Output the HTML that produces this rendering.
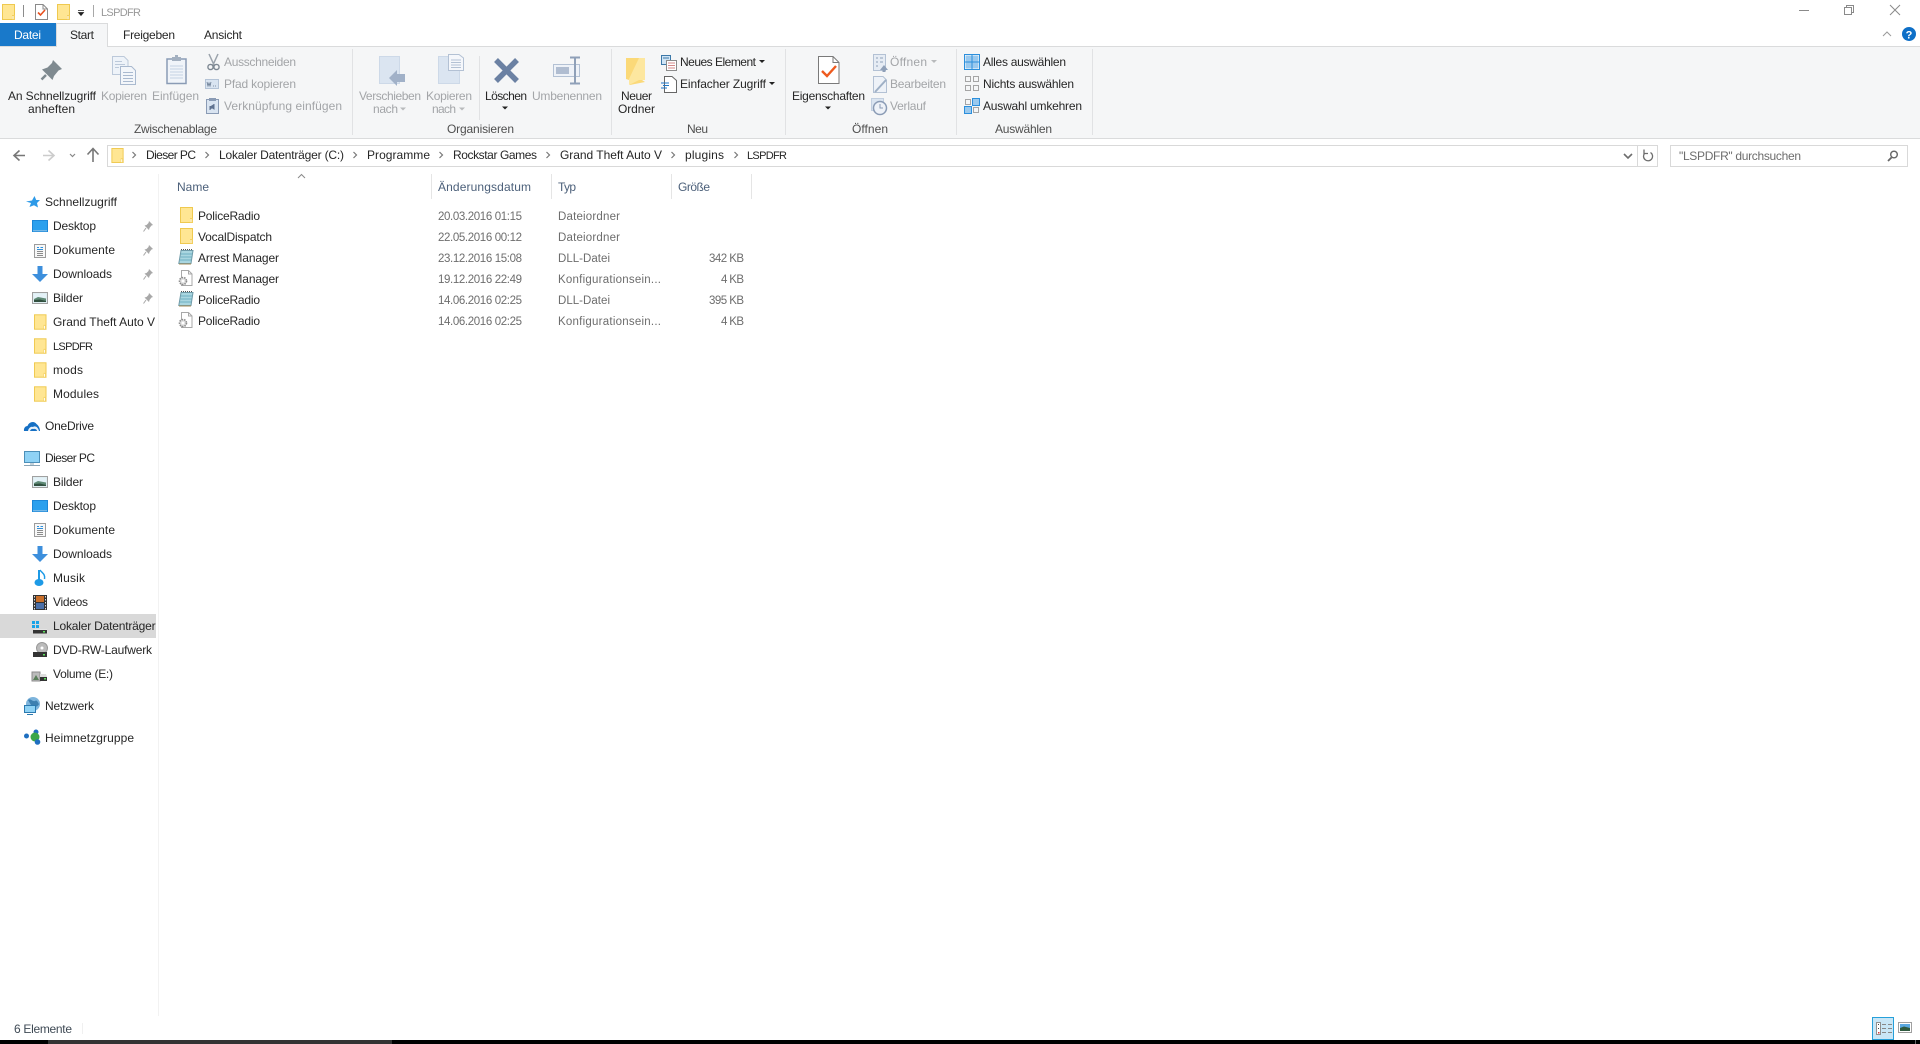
<!DOCTYPE html>
<html lang="de"><head><meta charset="utf-8"><title>LSPDFR</title>
<style>
html,body{margin:0;padding:0;background:#fff;width:1920px;height:1044px;overflow:hidden}
svg{display:block;position:absolute;left:0;top:0}
text{font-family:"Liberation Sans",sans-serif;font-size:12px;fill:#000;white-space:pre}
.g{fill:#a3a5a8}.d{fill:#6d6d6d;font-size:11.5px}.h{fill:#4c607a}.t{fill:#3f4a55}.w{fill:#fff}.l{fill:#4f4f4f}
.b{fill:#262626}.s{font-size:11px}
</style></head><body>
<svg width="1920" height="1044" viewBox="0 0 1920 1044" xmlns="http://www.w3.org/2000/svg">
<defs>
<symbol id="folder" viewBox="0 0 13 16" overflow="visible"><rect x=".5" y=".5" width="12" height="15" fill="#ffe693" stroke="#efc94f"/><rect x="10" y="11" width="3" height="5" fill="#f3cf5f"/><rect x="10.5" y="12" width="1" height="3" fill="#fff"/></symbol>
<symbol id="dll" viewBox="0 0 16 16" overflow="visible"><path d="M3 1.5H15L13 14.5H.8z" fill="#a9d6e0" stroke="#6e9aa8"/><path d="M3 5H14M2.6 8H13.6M2 11H13" stroke="#6fb0c2"/><path d="M3 .5h12" stroke="#555" stroke-dasharray="1 1"/><path d="M1 15h12" stroke="#a58f5c"/></symbol>
<symbol id="cfg" viewBox="0 0 15 16" overflow="visible"><path d="M3.5.5H10.500L14 4V15.500H3.500z" fill="#fff" stroke="#a8a8a8"/><path d="M10.500.5V4H14" fill="none" stroke="#a8a8a8"/><circle cx="5" cy="11" r="3.500" fill="#ddd" stroke="#8b8b8b" stroke-width="1.600" stroke-dasharray="1.500 1"/><circle cx="5" cy="11" r="1.400" fill="#fff"/></symbol>
<symbol id="pin" viewBox="0 0 10 11" overflow="visible"><path d="M6 0 10 4 8.500 4.500 6.500 7 6 9 1.500 4.500 3.500 4 5.500 2z" fill="#a8a8a8"/><path d="M3 7 .5 10.500" stroke="#a8a8a8"/></symbol>
<symbol id="bilder" viewBox="0 0 16 12" overflow="visible"><rect x=".5" y=".5" width="15" height="11" fill="#dfeef2" stroke="#a0a0a0"/><rect x="2" y="2" width="12" height="8" fill="#e4f2f8"/><path d="M2 7 6 5 14 6.500V10H2z" fill="#5f8a76"/><path d="M2 8 8 7.500 14 9V10H2z" fill="#31503f"/></symbol>
<symbol id="desk" viewBox="0 0 16 12" overflow="visible"><rect width="16" height="12" fill="#1a87d9"/><rect x="1" y="1" width="14" height="9" fill="#2aa0ee"/><path d="M1 10.800H15" stroke="#b9dcf2" stroke-width=".8"/></symbol>
<symbol id="docs" viewBox="0 0 12 14" overflow="visible"><rect x=".5" y=".5" width="11" height="13" fill="#f8f8f8" stroke="#9c9c9c"/><path d="M3 3.500H5M6.500 3.500H9M3 5.500H9" stroke="#2e8fdb"/><path d="M3 7.500H9M3 9.500H9M3 11.500H9" stroke="#8b8b8b"/></symbol>
<symbol id="down" viewBox="0 0 16 16" overflow="visible"><path d="M5.500 0H10.500V8H16L8 16 0 8H5.500z" fill="#3d8fdc"/></symbol>
<symbol id="gridb" viewBox="0 0 16 16" overflow="visible"><rect x=".5" y=".5" width="15" height="15" fill="#fff" stroke="#2c8fdc"/><rect x="1.500" y="1.500" width="6" height="6" fill="#9ac9ee"/><rect x="8.500" y="1.500" width="6" height="6" fill="#9ac9ee"/><rect x="1.500" y="8.500" width="6" height="6" fill="#9ac9ee"/><rect x="8.500" y="8.500" width="6" height="6" fill="#9ac9ee"/><path d="M8 1V15M1 8H15" stroke="#2c8fdc"/></symbol>
</defs>

<!-- backgrounds -->
<rect x="0" y="46" width="1920" height="92" fill="#f5f6f7"/>
<rect x="0" y="46" width="1920" height="1" fill="#dadbdc"/>
<rect x="0" y="138" width="1920" height="1" fill="#dadbdc"/>
<rect x="0" y="23" width="56" height="23" fill="#1979ca"/>
<path d="M56.500 46V23.500H107.500V46" fill="#f5f6f7" stroke="#dadbdc"/>
<rect x="57" y="44" width="50" height="4" fill="#f5f6f7"/>

<!-- quick access -->
<use href="#folder" x="2" y="4" width="13" height="16"/>
<rect x="23" y="5" width="1" height="12" fill="#8c8c8c"/>
<path d="M35.500 4.500H43L47.500 9V19.500H35.500z" fill="#fff" stroke="#8a8a8a"/><path d="M43 4.500V9H47.500" fill="none" stroke="#8a8a8a"/>
<path d="M38 12.500 40.500 15 45 10" fill="none" stroke="#e8501e" stroke-width="1.600"/>
<use href="#folder" x="57" y="4" width="13" height="16"/>
<path d="M78 10.500H84M78.500 12.500H83.500L81 15.500z" stroke="#222" fill="#222" stroke-width=".8"/>
<rect x="93" y="5" width="1" height="12" fill="#a8a8a8"/>
<text x="101" y="16" textLength="40" class="s" style="fill:#999">LSPDFR</text>

<!-- window controls -->
<rect x="1799" y="10" width="10" height="1" fill="#8a8a8a"/>
<path d="M1846.500 7.500V5.500H1853.500V12.500H1851.500M1844.500 7.500H1851.500V14.500H1844.500z" fill="none" stroke="#8a8a8a"/>
<path d="M1890 5 1900 15M1900 5 1890 15" stroke="#8a8a8a" stroke-width="1"/>
<path d="M1883 36 1887 32 1891 36" fill="none" stroke="#9a9a9a"/>
<circle cx="1909" cy="34" r="7" fill="#0e6fc7"/>
<text x="1909" y="38.500" text-anchor="middle" class="w" style="font-weight:bold;font-size:11px">?</text>

<!-- tabs -->
<text x="14" y="39" textLength="27" class="w">Datei</text>
<text x="70" y="39" textLength="24" class="b">Start</text>
<text x="123" y="39" textLength="52" class="b">Freigeben</text>
<text x="204" y="39" textLength="38" class="b">Ansicht</text>

<!-- ribbon group separators -->
<rect x="352" y="49" width="1" height="86" fill="#e1e2e4"/>
<rect x="479" y="56" width="1" height="64" fill="#e1e2e4"/>
<rect x="611" y="49" width="1" height="86" fill="#e1e2e4"/>
<rect x="785" y="49" width="1" height="86" fill="#e1e2e4"/>
<rect x="956" y="49" width="1" height="86" fill="#e1e2e4"/>
<rect x="1092" y="49" width="1" height="86" fill="#e1e2e4"/>

<!-- ribbon: Zwischenablage -->
<path d="M53 60 62 69 58.500 70.500 54 76 52.500 80 42 69.500 47.500 67.500 52 63z" fill="#7f8a90"/><path d="M46 75 41.500 79.500" stroke="#7f8a90" stroke-width="2.500"/>
<path d="M112.500 56.500H124L128 60.500V74.500H112.500z" fill="#eef3f9" stroke="#bcc9da"/>
<path d="M120.500 66.500H131.500L135.500 70.500V84.500H120.500z" fill="#f3f6fa" stroke="#a9b9cf"/>
<path d="M123 72.500H133M123 75.500H133M123 78.500H133M123 81.500H133" stroke="#a9b9cf"/>
<path d="M115 61.500H122M115 64.500H125M115 67.500H119" stroke="#bcc9da"/>
<rect x="167" y="59" width="19" height="24.500" fill="#f0f4f9" stroke="#8a9bb5" stroke-width="1.500"/>
<path d="M170 66H183M170 69H183M170 72H183M170 75H183M170 78H183" stroke="#c5d2e3"/>
<path d="M172 59V57H175V55H178V57H181V59V61H172z" fill="#a3b0c0"/>
<path d="M209 54 214.500 66M218 54 212.500 66" stroke="#9aa2ab" stroke-width="1.500"/><circle cx="210.500" cy="67" r="2.600" fill="none" stroke="#7d8792" stroke-width="1.400"/><circle cx="216.500" cy="67" r="2.600" fill="none" stroke="#7d8792" stroke-width="1.400"/>
<rect x="205.500" y="79.500" width="13" height="9" fill="#d9e4f1" stroke="#b4c3d6"/><path d="M207 82 208 86 209 83 210 86 211 82M213 86H214M215 86H216" stroke="#65778e" fill="none" stroke-width=".8"/>
<rect x="206.500" y="99.500" width="12" height="14" fill="#d9e4f1" stroke="#8a9bb5"/><rect x="209" y="98" width="7" height="3" fill="#8a9bb5"/><path d="M210 110V106.500H214M214 104V109L210 106.500" fill="#5f7290" stroke="#5f7290"/>

<text x="8" y="100" textLength="88" class="b">An Schnellzugriff</text>
<text x="28" y="113" textLength="47" class="b">anheften</text>
<text x="101" y="100" textLength="46" class="g">Kopieren</text>
<text x="152" y="100" textLength="47" class="g">Einfügen</text>
<text x="224" y="66" textLength="72" class="g">Ausschneiden</text>
<text x="224" y="88" textLength="72" class="g">Pfad kopieren</text>
<text x="224" y="110" textLength="118" class="g">Verknüpfung einfügen</text>
<text x="134" y="133" textLength="83" class="l">Zwischenablage</text>

<!-- ribbon: Organisieren -->
<rect x="379.500" y="56.500" width="20" height="27" fill="#dbe5f1" stroke="#cdd9e8"/>
<path d="M389 78 397 70V74H405V82H397V86z" fill="#a1b1c8"/>
<rect x="438.500" y="56.500" width="21" height="27" fill="#dbe5f1" stroke="#cdd9e8"/>
<path d="M448.500 54.500H459L463.500 58V70.500H448.500z" fill="#f5f7fb" stroke="#b3c1d4"/><path d="M451 60H461M451 62.500H461M451 65H461M451 67.500H461" stroke="#b3c1d4"/>
<path d="M496 60 517 81M517 60 496 81" stroke="#6b81a3" stroke-width="5.500"/>
<rect x="553.500" y="64.500" width="26" height="12" fill="#eef2f8" stroke="#b3c1d4"/><rect x="556" y="67" width="13" height="7" fill="#b0bdd1"/>
<path d="M570 57.500H580M570 83.500H580M575 58V83" stroke="#8fa0b8" stroke-width="2"/>
<text x="359" y="100" textLength="62" class="g">Verschieben</text>
<text x="373" y="113" textLength="25" class="g">nach</text>
<path d="M400 107.500H406L403 110.500z" fill="#b8babc"/>
<text x="426" y="100" textLength="46" class="g">Kopieren</text>
<text x="432" y="113" textLength="24" class="g">nach</text>
<path d="M459 107.500H465L462 110.500z" fill="#b8babc"/>
<text x="485" y="100" textLength="42" class="b">Löschen</text>
<path d="M502 106.500H508L505 109.500z" fill="#222"/>
<text x="532" y="100" textLength="70" class="g">Umbenennen</text>
<text x="447" y="133" textLength="67" class="l">Organisieren</text>

<!-- ribbon: Neu -->
<path d="M626 58H642V80L645 82 630 85 629 80 626 79z" fill="#fbd978"/><path d="M639 58H645V80H639L629 85V79z" fill="#fde79f"/>
<text x="621" y="100" textLength="31" class="b">Neuer</text>
<text x="618" y="113" textLength="37" class="b">Ordner</text>
<rect x="661.500" y="55.500" width="9" height="9" fill="#cfe4f5" stroke="#3c78a8"/><path d="M663 58H669" stroke="#3c78a8"/>
<rect x="666.500" y="60.500" width="10" height="10" fill="#fff" stroke="#8b8b8b"/><path d="M668 63H675M668 65.500H675M668 68H675" stroke="#d38a8a"/>
<path d="M664.500 76.500H672L676.500 80.500V92.500H664.500z" fill="#fff" stroke="#666"/>
<path d="M661 83H669M663 85.500H669M661 88H667" stroke="#1f77c8"/>
<text x="680" y="66" textLength="76" class="b">Neues Element</text>
<path d="M759 60H765L762 63z" fill="#222"/>
<text x="680" y="88" textLength="86" class="b">Einfacher Zugriff</text>
<path d="M769 82H775L772 85z" fill="#222"/>
<text x="687" y="133" textLength="21" class="l">Neu</text>

<!-- ribbon: Öffnen -->
<path d="M818.500 56.500H833L839 62.500V83.500H818.500z" fill="#fff" stroke="#7a7a7a"/><path d="M833 56.500V62.500H839" fill="none" stroke="#7a7a7a"/>
<path d="M822 71 827 76 836 66" fill="none" stroke="#ee5a1e" stroke-width="2.400"/>
<text x="792" y="100" textLength="73" class="b">Eigenschaften</text>
<path d="M825 106.500H831L828 109.500z" fill="#222"/>
<rect x="873.500" y="54.500" width="12" height="16" fill="#e6ecf4" stroke="#b3c1d4"/><path d="M876 58H878M880 58H883M876 62H878M880 62H883M876 66H878" stroke="#8fa0b8"/><path d="M884 65 888 70H885.500V72H882.500V70H880z" fill="#8fa0b8"/>
<path d="M873.500 76.500H883L886.500 80V92.500H873.500z" fill="#eef2f8" stroke="#b3c1d4"/><path d="M875 92 886 80" stroke="#9fb0c6" stroke-width="2"/>
<rect x="871.500" y="98.500" width="12" height="12" fill="#dbe5f1" stroke="#c2cfe0"/><circle cx="880" cy="108" r="6.500" fill="#eef2f8" stroke="#8a9bb5" stroke-width="1.500"/><path d="M880 104V108H883" fill="none" stroke="#8a9bb5"/>
<text x="890" y="66" textLength="37" class="g">Öffnen</text>
<path d="M931 60H937L934 63z" fill="#b8babc"/>
<text x="890" y="88" textLength="56" class="g">Bearbeiten</text>
<text x="890" y="110" textLength="36" class="g">Verlauf</text>
<text x="852" y="133" textLength="36" class="l">Öffnen</text>

<!-- ribbon: Auswählen -->
<use href="#gridb" x="964" y="54" width="16" height="16"/>
<path d="M965.500 76.500H970.500V81.500H965.500zM973.500 76.500H978.500V81.500H973.500zM965.500 85.500H970.500V90.500H965.500zM973.500 85.500H978.500V90.500H973.500z" fill="none" stroke="#a5a5a5"/>
<rect x="972.500" y="98.500" width="7" height="7" fill="#9ac9ee" stroke="#2c8fdc"/><rect x="964.500" y="106.500" width="7" height="7" fill="#9ac9ee" stroke="#2c8fdc"/>
<path d="M965.500 99.500H970.500V104.500H965.500zM973.500 107.500H978.500V112.500H973.500z" fill="none" stroke="#a5a5a5"/>
<text x="983" y="66" textLength="83" class="b">Alles auswählen</text>
<text x="983" y="88" textLength="91" class="b">Nichts auswählen</text>
<text x="983" y="110" textLength="99" class="b">Auswahl umkehren</text>
<text x="995" y="133" textLength="57" class="l">Auswählen</text>

<!-- navigation -->
<path d="M25 155.500H15M19.500 150.500 14 155.500 19.500 160.500" fill="none" stroke="#777" stroke-width="1.600"/>
<path d="M43 155.500H53M48.500 150.500 54 155.500 48.500 160.500" fill="none" stroke="#ccc" stroke-width="1.600"/>
<path d="M70 154 72.500 156.500 75 154" fill="none" stroke="#888" stroke-width="1.200"/>
<path d="M93 162V149M87.500 154.500 93 148.500 98.500 154.500" fill="none" stroke="#777" stroke-width="1.600"/>

<rect x="107.500" y="145.500" width="1550" height="21" fill="#fff" stroke="#d9d9d9"/>
<rect x="1637" y="146" width="1" height="20" fill="#d9d9d9"/>
<use href="#folder" x="111" y="148" width="13" height="15"/>
<path d="M132.500 152 135.500 155 132.500 158M205.500 152 208.500 155 205.500 158M353.500 152 356.500 155 353.500 158M439.500 152 442.500 155 439.500 158M546.500 152 549.500 155 546.500 158M671.500 152 674.500 155 671.500 158M734.500 152 737.500 155 734.500 158" fill="none" stroke="#777" stroke-width="1.200"/>
<text x="146" y="159" textLength="50" class="b">Dieser PC</text>
<text x="219" y="159" textLength="125" class="b">Lokaler Datenträger (C:)</text>
<text x="367" y="159" textLength="63" class="b">Programme</text>
<text x="453" y="159" textLength="84" class="b">Rockstar Games</text>
<text x="560" y="159" textLength="102" class="b">Grand Theft Auto V</text>
<text x="685" y="159" textLength="39" class="b">plugins</text>
<text x="747" y="159" textLength="40" class="b s">LSPDFR</text>
<path d="M1624 154 1628 158 1632 154" fill="none" stroke="#6d6d6d" stroke-width="1.600"/>
<path d="M1650.500 152.500A4.500 4.500 0 1 1 1644.500 153.500M1644 149.500V153.500H1648" fill="none" stroke="#6d6d6d" stroke-width="1.300"/>

<rect x="1670.500" y="145.500" width="237" height="21" fill="#fff" stroke="#d9d9d9"/>
<text x="1679" y="160" textLength="122" class="d" style="font-size:12px">"LSPDFR" durchsuchen</text>
<circle cx="1894" cy="154.500" r="3.300" fill="none" stroke="#666" stroke-width="1.400"/><path d="M1891.500 157.500 1888 161" stroke="#666" stroke-width="1.800"/>

<!-- sidebar -->
<rect x="158" y="174" width="1" height="842" fill="#f2f2f2"/>
<rect x="0" y="614" width="156" height="24" fill="#d9d9d9"/>
<path d="M34.500 196 36.200 200H40L37 203 38 207.500 34 205.200 29.500 207 31 203 26 201.500 32 200.500z" fill="#2d9ae8"/>
<text x="45" y="206" textLength="72" class="b">Schnellzugriff</text>
<use href="#desk" x="32" y="220" width="16" height="12"/>
<text x="53" y="230" textLength="43" class="b">Desktop</text>
<use href="#pin" x="143" y="221" width="10" height="11"/>
<use href="#docs" x="34" y="244" width="12" height="14"/>
<text x="53" y="254" textLength="62" class="b">Dokumente</text>
<use href="#pin" x="143" y="245" width="10" height="11"/>
<use href="#down" x="32" y="266" width="16" height="16"/>
<text x="53" y="278" textLength="59" class="b">Downloads</text>
<use href="#pin" x="143" y="269" width="10" height="11"/>
<use href="#bilder" x="32" y="292" width="16" height="12"/>
<text x="53" y="302" textLength="30" class="b">Bilder</text>
<use href="#pin" x="143" y="293" width="10" height="11"/>
<use href="#folder" x="34" y="314" width="12.500" height="16"/>
<text x="53" y="326" textLength="102" class="b">Grand Theft Auto V</text>
<use href="#folder" x="34" y="338" width="12.500" height="16"/>
<text x="53" y="350" textLength="40" class="b s">LSPDFR</text>
<use href="#folder" x="34" y="362" width="12.500" height="16"/>
<text x="53" y="374" textLength="30" class="b">mods</text>
<use href="#folder" x="34" y="386" width="12.500" height="16"/>
<text x="53" y="398" textLength="46" class="b">Modules</text>

<path d="M24 431C23.500 428 25.500 426 27.500 426 29 422 34 420.500 36.500 424 38.500 425.500 40 428 40 431z" fill="#1670c4"/><path d="M28 431C28.500 428 31 426 33 427 35 425.500 38 427 39 431z" fill="#fff" opacity=".9"/><path d="M30 431C30.500 429 32.500 428.500 33.500 429 35 428.500 37 429.500 37 431z" fill="#1670c4"/>
<text x="45" y="430" textLength="49" class="b">OneDrive</text>

<rect x="24.500" y="451.500" width="15" height="11" fill="#8fd2f5" stroke="#4c8fb8"/><path d="M30 464H34M24 465.500H40" stroke="#8aa4b5"/>
<text x="45" y="462" textLength="50" class="b">Dieser PC</text>
<use href="#bilder" x="32" y="476" width="16" height="12"/>
<text x="53" y="486" textLength="30" class="b">Bilder</text>
<use href="#desk" x="32" y="500" width="16" height="12"/>
<text x="53" y="510" textLength="43" class="b">Desktop</text>
<use href="#docs" x="34" y="523" width="12" height="14"/>
<text x="53" y="534" textLength="62" class="b">Dokumente</text>
<use href="#down" x="32" y="546" width="16" height="16"/>
<text x="53" y="558" textLength="59" class="b">Downloads</text>
<path d="M39 570V582" stroke="#1d9ae6" stroke-width="2"/><ellipse cx="39" cy="582.500" rx="4.500" ry="3.500" fill="#1d9ae6"/><path d="M40 570C42 573 45.500 574 44.500 579" fill="none" stroke="#1d9ae6" stroke-width="1.500"/>
<text x="53" y="582" textLength="32" class="b">Musik</text>
<rect x="33" y="595" width="14" height="15" fill="#333"/><rect x="36" y="596" width="8" height="6" fill="#c96f2a"/><rect x="36" y="603" width="8" height="6" fill="#4a6fa8"/><path d="M34.500 596V610M45.500 596V610" stroke="#ddd" stroke-dasharray="1.500 1.500"/>
<text x="53" y="606" textLength="35" class="b">Videos</text>
<path d="M32 621h3v3h-3zM36 621h3v3h-3zM32 625h3v3h-3zM36 625h3v3h-3z" fill="#19a3e8"/><path d="M34 629H47L48 633H33z" fill="#e4e4e4"/><rect x="33" y="630" width="14" height="3.500" fill="#333"/><rect x="43" y="631" width="2" height="1.500" fill="#5ce05c"/>
<clipPath id="clipL"><rect x="50" y="614" width="106" height="24"/></clipPath>
<text x="53" y="630" textLength="125" class="b" clip-path="url(#clipL)">Lokaler Datenträger (C:)</text>
<circle cx="42" cy="648" r="5.500" fill="#bbb" stroke="#999"/><circle cx="42" cy="648" r="1.500" fill="#fff"/><rect x="33" y="652" width="14" height="5" fill="#333"/><rect x="43" y="654" width="2" height="1.500" fill="#5ce05c"/>
<clipPath id="clipD"><rect x="50" y="638" width="106" height="24"/></clipPath>
<text x="53" y="654" textLength="99" class="b" clip-path="url(#clipD)">DVD-RW-Laufwerk</text>
<rect x="32" y="672" width="8" height="9" fill="#bbb" stroke="#8b8b8b"/><path d="M33 680 36 675 39 680z" fill="#5a7f5a"/><path d="M40 674H46L47 677H40z" fill="#dedede"/><rect x="40" y="677" width="7" height="4" fill="#333"/><rect x="44" y="678" width="2" height="1.500" fill="#5ce05c"/>
<text x="53" y="678" textLength="60" class="b">Volume (E:)</text>
<circle cx="33" cy="704" r="7" fill="#7db4dc"/><path d="M28 700C31 698 32 702 35 701 37 699 38 703 39 704 37 708 33 707 31 705z" fill="#3d7fb0"/><rect x="24.500" y="705.500" width="11" height="7" fill="#8fd2f5" stroke="#2c7ab0"/><path d="M27 714.500H33" stroke="#2c7ab0"/>
<text x="45" y="710" textLength="49" class="b">Netzwerk</text>
<circle cx="26.500" cy="736" r="2.500" fill="#1f6fc0"/><circle cx="36" cy="732" r="2.500" fill="#1f6fc0"/><circle cx="35" cy="737" r="4.500" fill="#3aa648"/><circle cx="37.500" cy="742" r="2.800" fill="#1f6fc0"/>
<text x="45" y="742" textLength="89" class="b">Heimnetzgruppe</text>

<!-- list header -->
<text x="177" y="191" textLength="32" class="h">Name</text>
<path d="M298 178 301.500 174.500 305 178" fill="none" stroke="#8a8a8a"/>
<text x="438" y="191" textLength="93" class="h">Änderungsdatum</text>
<text x="558" y="191" textLength="18" class="h">Typ</text>
<text x="678" y="191" textLength="32" class="h">Größe</text>
<rect x="431" y="174" width="1" height="25" fill="#e5e5e5"/>
<rect x="551" y="174" width="1" height="25" fill="#e5e5e5"/>
<rect x="671" y="174" width="1" height="25" fill="#e5e5e5"/>
<rect x="751" y="174" width="1" height="25" fill="#e5e5e5"/>

<!-- rows -->
<use href="#folder" x="180" y="207" width="13" height="16"/>
<text x="198" y="220" textLength="62" class="b">PoliceRadio</text>
<text x="438" y="220" textLength="84" class="d">20.03.2016 01:15</text>
<text x="558" y="220" textLength="62" class="d">Dateiordner</text>

<use href="#folder" x="180" y="228" width="13" height="16"/>
<text x="198" y="241" textLength="74" class="b">VocalDispatch</text>
<text x="438" y="241" textLength="84" class="d">22.05.2016 00:12</text>
<text x="558" y="241" textLength="62" class="d">Dateiordner</text>

<use href="#dll" x="178" y="249" width="16" height="16"/>
<text x="198" y="262" textLength="81" class="b">Arrest Manager</text>
<text x="438" y="262" textLength="84" class="d">23.12.2016 15:08</text>
<text x="558" y="262" textLength="52" class="d">DLL-Datei</text>
<text x="709" y="262" textLength="35" class="d">342 KB</text>

<use href="#cfg" x="178" y="270" width="15" height="16"/>
<text x="198" y="283" textLength="81" class="b">Arrest Manager</text>
<text x="438" y="283" textLength="84" class="d">19.12.2016 22:49</text>
<text x="558" y="283" textLength="103" class="d">Konfigurationsein...</text>
<text x="721" y="283" textLength="23" class="d">4 KB</text>

<use href="#dll" x="178" y="291" width="16" height="16"/>
<text x="198" y="304" textLength="62" class="b">PoliceRadio</text>
<text x="438" y="304" textLength="84" class="d">14.06.2016 02:25</text>
<text x="558" y="304" textLength="52" class="d">DLL-Datei</text>
<text x="709" y="304" textLength="35" class="d">395 KB</text>

<use href="#cfg" x="178" y="312" width="15" height="16"/>
<text x="198" y="325" textLength="62" class="b">PoliceRadio</text>
<text x="438" y="325" textLength="84" class="d">14.06.2016 02:25</text>
<text x="558" y="325" textLength="103" class="d">Konfigurationsein...</text>
<text x="721" y="325" textLength="23" class="d">4 KB</text>

<!-- status bar -->
<text x="14" y="1033" textLength="58" class="t">6 Elemente</text>
<rect x="82" y="1023" width="1" height="11" fill="#f0f0f0"/>
<rect x="1872.500" y="1017.500" width="21" height="22" fill="#c9e6f6" stroke="#26a0da"/>
<rect x="1876.500" y="1022.500" width="4" height="12" fill="#fff" stroke="#909090"/>
<rect x="1878" y="1024" width="1" height="1" fill="#444"/><rect x="1878" y="1028" width="1" height="1" fill="#444"/><rect x="1878" y="1032" width="1.500" height="1.500" fill="#d83a3a"/>
<path d="M1882 1024.500H1886M1888 1024.500H1892M1882 1028.500H1886M1888 1028.500H1892M1882 1032.500H1886M1888 1032.500H1892" stroke="#888"/>
<rect x="1898.500" y="1022.500" width="13" height="10" fill="#fff" stroke="#a0a0a0"/>
<rect x="1900" y="1024" width="10" height="7" fill="#5aa8e0"/><path d="M1900 1028 1904 1026.500 1910 1028V1031H1900z" fill="#2f5a3f"/>

<!-- bottom strip -->
<rect x="0" y="1040" width="1920" height="4" fill="#000"/>
<rect x="48" y="1040" width="344" height="4" fill="#333"/>
<rect x="1915" y="1040" width="1" height="4" fill="#666"/>
</svg>
</body></html>
